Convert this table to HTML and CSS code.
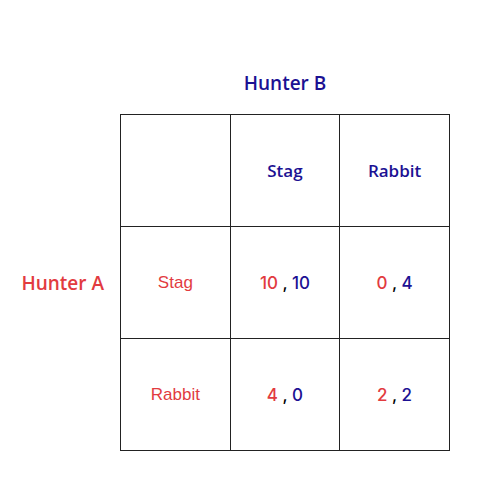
FILE: index.html
```html
<!DOCTYPE html>
<html lang="en">
<head>
    <meta charset="UTF-8">
    <meta name="viewport" content="width=device-width, initial-scale=1.0">
    <title>Stag Hunt</title>
    <link rel="stylesheet" href="styles.css">
</head>
<body>
    <div class="game">
        <div class="player-b">Hunter B</div>
        <div class="player-a">Hunter A</div>
        <table class="matrix">
            <tr>
                <td></td>
                <th class="b">Stag</th>
                <th class="b">Rabbit</th>
            </tr>
            <tr>
                <th class="a">Stag</th>
                <td><span class="a">10</span> , <span class="b">10</span></td>
                <td><span class="a">0</span> , <span class="b">4</span></td>
            </tr>
            <tr>
                <th class="a">Rabbit</th>
                <td><span class="a">4</span> , <span class="b">0</span></td>
                <td><span class="a">2</span> , <span class="b">2</span></td>
            </tr>
        </table>
    </div>
</body>
</html>
```

FILE: styles.css
```css
body {
    margin: 0;
    background-color: white;
    font-family: "Open Sans", sans-serif;
}
.game {
    display: grid;
    grid-template-columns: 120px 330px;
    grid-template-rows: auto auto;
    padding-top: 70px;
}
.player-b {
    grid-column: 2;
    text-align: center;
    color: #1c1193;
    font-size: 19px;
    font-weight: 600;
    height: 44px;
}
.player-a {
    grid-column: 1;
    grid-row: 2;
    align-self: center;
    text-align: right;
    padding-right: 16px;
    color: #e23b3f;
    font-size: 19px;
    font-weight: 600;
}
.matrix {
    grid-column: 2;
    grid-row: 2;
    width: 330px;
    border-collapse: collapse;
}
.matrix td, .matrix th {
    border: 1px solid #222;
    width: 110px;
    height: 111px;
    padding: 0;
    text-align: center;
    font-family: Inter, sans-serif;
    font-size: 17px;
    font-weight: 500;
}
.matrix th.b {
    color: #1c1193;
    font-family: "Open Sans", sans-serif;
    font-size: 17px;
    font-weight: 600;
}
.matrix th.a {
    color: #e23b3f;
    font-family: "Liberation Sans", Arial, sans-serif;
    font-size: 17px;
    font-weight: 400;
}
.a {
    color: #e23b3f;
}
.b {
    color: #1c1193;
}
```
